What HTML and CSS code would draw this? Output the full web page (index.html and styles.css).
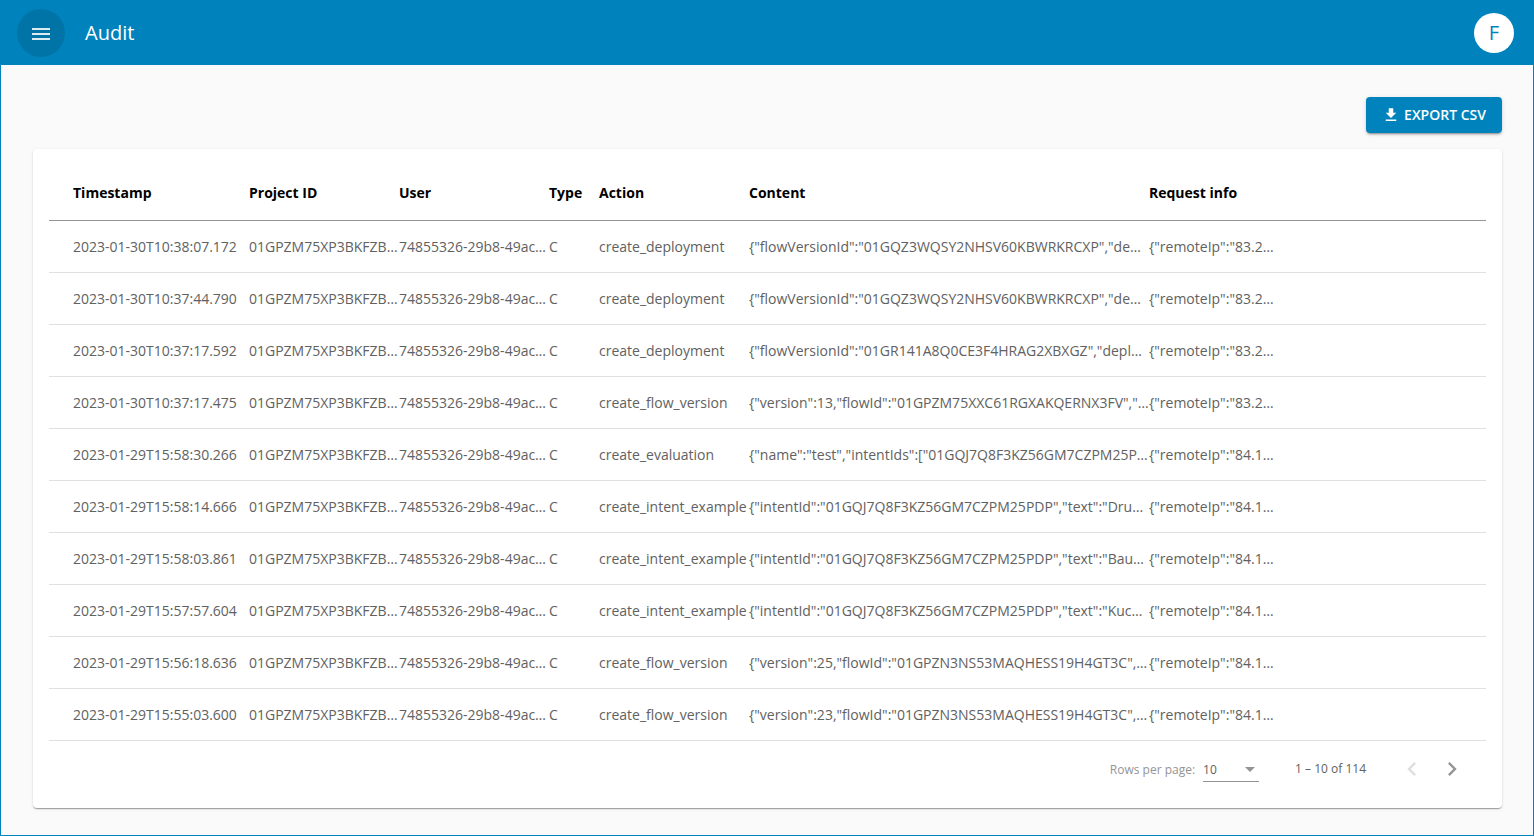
FILE: index.html
```html
<!DOCTYPE html>
<html lang="en">
<head>
<meta charset="utf-8">
<title>Audit</title>
<link rel="stylesheet" href="styles.css">
</head>
<body>
<div class="app">
  <header class="toolbar">
    <button class="menu-button" type="button" aria-label="Menu">
      <svg width="24" height="24" viewBox="0 0 24 24" fill="currentColor"><path d="M3 18h18v-2H3v2zm0-5h18v-2H3v2zm0-7v2h18V6H3z"/></svg>
    </button>
    <h1 class="title">Audit</h1>
    <button class="avatar" type="button">F</button>
  </header>
  <main class="content">
    <div class="actions">
      <button class="export" type="button">
        <svg width="18" height="18" viewBox="0 0 24 24" fill="currentColor"><path d="M19 9h-4V3H9v6H5l7 7 7-7zM5 18v2h14v-2H5z"/></svg>
        <span class="export-text">EXPORT CSV</span>
      </button>
    </div>
    <section class="card">
      <table class="table">
        <colgroup>
          <col class="col-time"><col class="col-id"><col class="col-id"><col class="col-type"><col class="col-id"><col class="col-content"><col>
        </colgroup>
        <thead>
          <tr><th>Timestamp</th><th>Project ID</th><th>User</th><th>Type</th><th>Action</th><th>Content</th><th>Request info</th></tr>
        </thead>
        <tbody>
          <tr><td>2023-01-30T10:38:07.172</td><td>01GPZM75XP3BKFZB…</td><td>74855326-29b8-49ac…</td><td>C</td><td>create_deployment</td><td>{"flowVersionId":"01GQZ3WQSY2NHSV60KBWRKRCXP","de…</td><td>{"remoteIp":"83.2…</td></tr>
          <tr><td>2023-01-30T10:37:44.790</td><td>01GPZM75XP3BKFZB…</td><td>74855326-29b8-49ac…</td><td>C</td><td>create_deployment</td><td>{"flowVersionId":"01GQZ3WQSY2NHSV60KBWRKRCXP","de…</td><td>{"remoteIp":"83.2…</td></tr>
          <tr><td>2023-01-30T10:37:17.592</td><td>01GPZM75XP3BKFZB…</td><td>74855326-29b8-49ac…</td><td>C</td><td>create_deployment</td><td>{"flowVersionId":"01GR141A8Q0CE3F4HRAG2XBXGZ","depl…</td><td>{"remoteIp":"83.2…</td></tr>
          <tr><td>2023-01-30T10:37:17.475</td><td>01GPZM75XP3BKFZB…</td><td>74855326-29b8-49ac…</td><td>C</td><td>create_flow_version</td><td>{"version":13,"flowId":"01GPZM75XXC61RGXAKQERNX3FV","…</td><td>{"remoteIp":"83.2…</td></tr>
          <tr><td>2023-01-29T15:58:30.266</td><td>01GPZM75XP3BKFZB…</td><td>74855326-29b8-49ac…</td><td>C</td><td>create_evaluation</td><td>{"name":"test","intentIds":["01GQJ7Q8F3KZ56GM7CZPM25P…</td><td>{"remoteIp":"84.1…</td></tr>
          <tr><td>2023-01-29T15:58:14.666</td><td>01GPZM75XP3BKFZB…</td><td>74855326-29b8-49ac…</td><td>C</td><td>create_intent_example</td><td>{"intentId":"01GQJ7Q8F3KZ56GM7CZPM25PDP","text":"Dru…</td><td>{"remoteIp":"84.1…</td></tr>
          <tr><td>2023-01-29T15:58:03.861</td><td>01GPZM75XP3BKFZB…</td><td>74855326-29b8-49ac…</td><td>C</td><td>create_intent_example</td><td>{"intentId":"01GQJ7Q8F3KZ56GM7CZPM25PDP","text":"Bau…</td><td>{"remoteIp":"84.1…</td></tr>
          <tr><td>2023-01-29T15:57:57.604</td><td>01GPZM75XP3BKFZB…</td><td>74855326-29b8-49ac…</td><td>C</td><td>create_intent_example</td><td>{"intentId":"01GQJ7Q8F3KZ56GM7CZPM25PDP","text":"Kuc…</td><td>{"remoteIp":"84.1…</td></tr>
          <tr><td>2023-01-29T15:56:18.636</td><td>01GPZM75XP3BKFZB…</td><td>74855326-29b8-49ac…</td><td>C</td><td>create_flow_version</td><td>{"version":25,"flowId":"01GPZN3NS53MAQHESS19H4GT3C",…</td><td>{"remoteIp":"84.1…</td></tr>
          <tr><td>2023-01-29T15:55:03.600</td><td>01GPZM75XP3BKFZB…</td><td>74855326-29b8-49ac…</td><td>C</td><td>create_flow_version</td><td>{"version":23,"flowId":"01GPZN3NS53MAQHESS19H4GT3C",…</td><td>{"remoteIp":"84.1…</td></tr>
        </tbody>
      </table>
      <div class="paginator">
        <label class="size-label" for="page-size">Rows per page:</label>
        <div class="select-box">
          <select id="page-size" class="select"><option>10</option><option>25</option><option>50</option></select>
          <svg class="select-arrow" width="10" height="5" viewBox="0 0 10 5" fill="currentColor"><path d="M0 0h10L5 5z"/></svg>
        </div>
        <span class="range">1 – 10 of 114</span>
        <div class="pager">
          <button class="page-button" type="button" aria-label="Previous page" disabled>
            <svg width="28" height="28" viewBox="0 0 24 24" fill="currentColor"><path d="M15.41 7.41L14 6l-6 6 6 6 1.41-1.41L10.83 12z"/></svg>
          </button>
          <button class="page-button" type="button" aria-label="Next page">
            <svg width="28" height="28" viewBox="0 0 24 24" fill="currentColor"><path d="M10 6L8.59 7.41 13.17 12l-4.58 4.59L10 18l6-6z"/></svg>
          </button>
        </div>
      </div>
    </section>
  </main>
</div>
</body>
</html>
```
FILE: styles.css
```css
* {
  box-sizing: border-box;
}

body {
  margin: 0;
  font-family: "Open Sans", "Noto Sans", sans-serif;
  font-size: 14px;
  color: #616161;
}

button,
select {
  font-family: inherit;
  border: 0;
  padding: 0;
  cursor: pointer;
}

.app {
  min-height: 100vh;
  background: #fafafa;
  border: 1px solid #0083bc;
}

.toolbar {
  display: flex;
  align-items: center;
  gap: 20px;
  height: 64px;
  padding: 0 19px 0 16px;
  background: #0083bc;
}

.menu-button {
  display: grid;
  place-items: center;
  width: 48px;
  height: 48px;
  padding-top: 2px;
  border-radius: 50%;
  background: #0074a6;
  color: #dcebf2;
}

.title {
  flex: 1;
  margin: 0;
  font-size: 20px;
  line-height: 32px;
  font-weight: 500;
  color: #fff;
}

.avatar {
  width: 40px;
  height: 40px;
  padding-bottom: 2px;
  border-radius: 50%;
  background: #fff;
  color: #0083bc;
  font-size: 20px;
  font-weight: 500;
}

.content {
  padding: 32px 31px 27px 32px;
}

.actions {
  display: flex;
  justify-content: flex-end;
  margin-bottom: 16px;
}

.export {
  display: flex;
  align-items: center;
  gap: 4px;
  height: 36px;
  padding: 0 16px;
  border-radius: 4px;
  background: #0083bc;
  color: #fff;
  font-size: 14px;
  line-height: 20px;
  font-weight: 600;
  box-shadow: 0 3px 1px -2px rgba(0, 0, 0, 0.2), 0 2px 2px 0 rgba(0, 0, 0, 0.14), 0 1px 5px 0 rgba(0, 0, 0, 0.12);
}

.card {
  padding: 16px;
  border-radius: 4px;
  background: #fff;
  box-shadow: 0 2px 1px -1px rgba(0, 0, 0, 0.2), 0 1px 1px 0 rgba(0, 0, 0, 0.14), 0 1px 3px 0 rgba(0, 0, 0, 0.12);
}

.table {
  width: 100%;
  table-layout: fixed;
  border-collapse: separate;
  border-spacing: 0;
}

.col-time {
  width: 200px;
}

.col-id {
  width: 150px;
}

.col-type {
  width: 50px;
}

.col-content {
  width: 400px;
}

.table th,
.table td {
  height: 52px;
  padding: 0;
  text-align: left;
  white-space: nowrap;
  border-bottom: 1px solid #e0e0e0;
}

.table th {
  height: 56px;
  font-weight: 700;
  color: #000;
  border-bottom-color: #949494;
}

.table th:first-child,
.table td:first-child {
  padding-left: 24px;
}

.paginator {
  display: flex;
  align-items: center;
  justify-content: flex-end;
  min-height: 51px;
  padding: 0 14px 0 0;
  font-size: 12px;
}

.size-label {
  margin-right: 8px;
  padding-top: 6px;
  color: #949494;
}

.select-box {
  position: relative;
  width: 56px;
  margin: 6px 36px 0 0;
  border-bottom: 1px solid #949494;
}

.select {
  display: block;
  width: 100%;
  height: 24px;
  appearance: none;
  background: transparent;
  color: #616161;
  font-size: 12px;
}

.select-arrow {
  position: absolute;
  right: 4px;
  top: 10px;
  color: #949494;
  pointer-events: none;
}

.range {
  margin-right: 26px;
  padding-top: 4px;
}

.pager {
  display: flex;
  padding-top: 5px;
}

.page-button {
  display: grid;
  place-items: center;
  width: 40px;
  height: 40px;
  background: transparent;
  color: #949494;
}

.page-button:disabled {
  color: #dedede;
  cursor: default;
}
```
